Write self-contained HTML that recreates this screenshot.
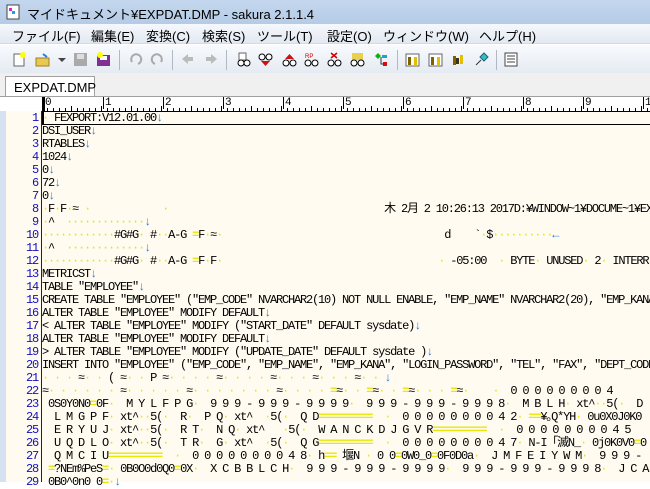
<!DOCTYPE html>
<html><head><meta charset="utf-8"><style>
*{margin:0;padding:0;box-sizing:border-box}
body{width:650px;height:482px;overflow:hidden;background:#fff;font-family:"Liberation Sans","Noto Sans CJK JP",sans-serif;position:relative}
#title{position:absolute;left:0;top:0;width:650px;height:24px;background:linear-gradient(#c4d7ee,#b5cbe6);font-size:13px;color:#000}
#title span{position:absolute;left:27px;top:4px}
#menu{position:absolute;left:0;top:24px;width:650px;height:20px;background:linear-gradient(#f5f8fc,#e3e9f2);font-size:13px;border-bottom:1px solid #d4dbe5}
#menu span{position:absolute;top:2px}
#tb{position:absolute;left:0;top:45px;width:650px;height:28px;background:linear-gradient(#f8fafd,#e5ebf3)}
.ic{position:absolute;top:7px;width:15px;height:15px}
.sep{position:absolute;top:5px;width:1px;height:20px;background:#b0b8c4}
#tabbar{position:absolute;left:0;top:73px;width:650px;height:24px;background:#f0f0f0}
#tab{position:absolute;left:5px;top:3px;width:90px;height:21px;background:#fff;border:1px solid #a0a0a0;border-bottom:none;font-size:13px;padding:3px 0 0 8px}
#ruler{position:absolute;left:0;top:96px;width:650px;height:15px;background:#fff;border-top:1px solid #a0a0a0;font-family:"Liberation Mono",monospace;font-size:11px}
#ed{position:absolute;left:0;top:111px;width:650px;height:371px;background:#fffbf0}
#strip{position:absolute;left:0;top:111px;width:6px;height:371px;background:#d6e2f2}
#vl{position:absolute;left:41px;top:111px;width:1px;height:371px;background:#1010c0}
#nums{position:absolute;left:6px;top:112px;width:32px;text-align:right;color:#1010c0;font-family:"Liberation Mono",monospace;font-size:12px;line-height:13px;letter-spacing:-1.2px}
#txt{position:absolute;left:42px;top:112px;font-family:"Liberation Mono","Noto Sans CJK JP",monospace;font-size:12px;line-height:13px;letter-spacing:-1.2px;white-space:pre;color:#000}
.d{color:#e6e600}
.b{color:#2080e0}
.y{color:#e8e800;font-weight:bold}
#cur{position:absolute;left:42px;top:111px;width:608px;height:14px;border-top:1px solid #000;border-bottom:1px solid #000;border-left:2px solid #000}
</style></head><body>
<div id="title"><svg style="position:absolute;left:6px;top:4px" width="14" height="16"><rect x="1" y="1" width="12" height="14" fill="#fff" stroke="#444"/><rect x="3" y="4" width="3" height="3" fill="#e020c0"/><rect x="6" y="7" width="3" height="3" fill="#20a0e0"/></svg><span>マイドキュメント¥EXPDAT.DMP - sakura 2.1.1.4</span></div>
<div id="menu"><span style="left:12px">ファイル(F)</span><span style="left:91px">編集(E)</span><span style="left:146px">変換(C)</span><span style="left:202px">検索(S)</span><span style="left:257px">ツール(T)</span><span style="left:327px">設定(O)</span><span style="left:383px">ウィンドウ(W)</span><span style="left:479px">ヘルプ(H)</span></div>
<div id="tb">
<svg class="ic" style="left:12px"><rect x="2" y="2" width="10" height="12" fill="#fff" stroke="#666"/><circle cx="11" cy="3" r="3" fill="#ff0"/></svg>
<svg class="ic" style="left:35px"><rect x="1" y="6" width="13" height="8" fill="#e8c850" stroke="#a08020"/><path d="M8 2 l4 3" stroke="#2080e0" stroke-width="2"/></svg>
<div style="position:absolute;left:58px;top:13px;border:4px solid transparent;border-top:4px solid #444"></div>
<svg class="ic" style="left:73px"><rect x="1" y="1" width="13" height="13" fill="#aaa"/><rect x="4" y="2" width="7" height="5" fill="#ddd"/></svg>
<svg class="ic" style="left:96px"><rect x="1" y="3" width="13" height="11" fill="#803090"/><rect x="4" y="4" width="7" height="4" fill="#fff"/><circle cx="4" cy="3" r="3" fill="#ff0"/></svg>
<div class="sep" style="left:119px"></div>
<svg class="ic" style="left:128px"><path d="M4 10 a5 5 0 1 1 6 2" stroke="#aaa" stroke-width="2" fill="none"/></svg>
<svg class="ic" style="left:150px"><path d="M11 10 a5 5 0 1 0 -6 2" stroke="#aaa" stroke-width="2" fill="none"/></svg>
<div class="sep" style="left:172px"></div>
<svg class="ic" style="left:180px"><path d="M2 7 l6 -5 v3 h5 v4 h-5 v3z" fill="#bbb"/></svg>
<svg class="ic" style="left:204px"><path d="M13 7 l-6 -5 v3 h-5 v4 h5 v3z" fill="#bbb"/></svg>
<div class="sep" style="left:226px"></div>
<svg class="ic" style="left:236px"><rect x="3" y="1" width="7" height="7" fill="#fff" stroke="#666"/><circle cx="5" cy="11" r="3" fill="#fff" stroke="#000"/><circle cx="11" cy="11" r="3" fill="#fff" stroke="#000"/></svg>
<svg class="ic" style="left:258px"><circle cx="4" cy="5" r="3" fill="#fff" stroke="#000"/><circle cx="11" cy="5" r="3" fill="#fff" stroke="#000"/><path d="M3 9 h9 l-4.5 5z" fill="#d01010"/></svg>
<svg class="ic" style="left:282px"><path d="M3 7 h9 l-4.5 -5z" fill="#d01010"/><circle cx="4" cy="11" r="3" fill="#fff" stroke="#000"/><circle cx="11" cy="11" r="3" fill="#fff" stroke="#000"/></svg>
<svg class="ic" style="left:304px"><text x="1" y="6" font-size="6" fill="#c00">RP</text><circle cx="4" cy="11" r="3" fill="#fff" stroke="#000"/><circle cx="11" cy="11" r="3" fill="#fff" stroke="#000"/></svg>
<svg class="ic" style="left:327px"><path d="M4 1 l6 5 M10 1 l-6 5" stroke="#c00" stroke-width="1.5"/><circle cx="4" cy="11" r="3" fill="#fff" stroke="#000"/><circle cx="11" cy="11" r="3" fill="#fff" stroke="#000"/></svg>
<svg class="ic" style="left:350px"><rect x="2" y="1" width="11" height="7" fill="#e8d050"/><circle cx="4" cy="11" r="3" fill="#fff" stroke="#000"/><circle cx="11" cy="11" r="3" fill="#fff" stroke="#000"/></svg>
<svg class="ic" style="left:374px"><path d="M1 4 l3 -3 3 3 -3 3z" fill="#10b010"/><rect x="8" y="3" width="5" height="3" fill="#20a0d0"/><rect x="9" y="10" width="4" height="4" fill="#d01010"/><path d="M7 5 v7 h3" stroke="#333" fill="none"/></svg>
<div class="sep" style="left:397px"></div>
<svg class="ic" style="left:405px"><rect x="1" y="2" width="13" height="12" fill="#fff" stroke="#666"/><rect x="3" y="5" width="3" height="8" fill="#806000"/><rect x="9" y="5" width="3" height="8" fill="#e0c000"/></svg>
<svg class="ic" style="left:428px"><rect x="1" y="2" width="13" height="12" fill="#fff" stroke="#666"/><rect x="3" y="5" width="3" height="8" fill="#806000"/><rect x="9" y="5" width="3" height="8" fill="#e0c000"/></svg>
<svg class="ic" style="left:451px"><rect x="2" y="4" width="3" height="9" fill="#806000"/><rect x="9" y="3" width="3" height="9" fill="#e0c000"/><rect x="5" y="6" width="3" height="6" fill="#403020"/></svg>
<svg class="ic" style="left:474px"><path d="M2 13 l5 -5" stroke="#333"/><path d="M6 5 l4 -4 4 4 -4 4z" fill="#30c0c0" stroke="#206080"/></svg>
<div class="sep" style="left:496px"></div>
<svg class="ic" style="left:504px"><rect x="1" y="1" width="12" height="13" fill="#fff" stroke="#444"/><path d="M3 4h8M3 7h8M3 10h8" stroke="#444"/></svg>
</div>
<div id="tabbar"><div id="tab">EXPDAT.DMP</div></div>
<div id="ruler">
<svg width="650" height="15" style="position:absolute;left:0;top:0"><rect x="42" y="0" width="3" height="14" fill="#000"/></svg>
<div style="position:absolute;top:0;left:0">
<span style="position:absolute;left:45px">0</span><span style="position:absolute;left:103px;border-left:1px solid #000;padding-left:1px">1</span><span style="position:absolute;left:163px;border-left:1px solid #000;padding-left:1px">2</span><span style="position:absolute;left:223px;border-left:1px solid #000;padding-left:1px">3</span><span style="position:absolute;left:283px;border-left:1px solid #000;padding-left:1px">4</span><span style="position:absolute;left:343px;border-left:1px solid #000;padding-left:1px">5</span><span style="position:absolute;left:403px;border-left:1px solid #000;padding-left:1px">6</span><span style="position:absolute;left:463px;border-left:1px solid #000;padding-left:1px">7</span><span style="position:absolute;left:523px;border-left:1px solid #000;padding-left:1px">8</span><span style="position:absolute;left:583px;border-left:1px solid #000;padding-left:1px">9</span><span style="position:absolute;left:643px;border-left:1px solid #000;padding-left:1px">1</span>
</div>
<div style="position:absolute;left:42px;top:11px;width:608px;height:3px;background:repeating-linear-gradient(90deg,transparent 0 5px,#000 5px 6px)"></div>
<div style="position:absolute;left:42px;top:9px;width:608px;height:5px;background:repeating-linear-gradient(90deg,transparent 0 29px,#000 29px 30px)"></div>
</div>
<div id="ed"></div><div id="strip"></div><div id="vl"></div>
<div id="nums">1<br>2<br>3<br>4<br>5<br>6<br>7<br>8<br>9<br>10<br>11<br>12<br>13<br>14<br>15<br>16<br>17<br>18<br>19<br>20<br>21<br>22<br>23<br>24<br>25<br>26<br>27<br>28<br>29</div>
<div id="cur"></div>
<div id="txt"><span class="d">·</span> FEXPORT:V12.01.00<span class="b">↓</span>
DSI_USER<span class="b">↓</span>
RTABLES<span class="b">↓</span>
1024<span class="b">↓</span>
0<span class="b">↓</span>
72<span class="b">↓</span>
0<span class="b">↓</span>
<span class="d">·</span>F<span class="d">·</span>F<span class="d">·</span>≈ <span class="d">·</span>            <span class="d">·</span>                                    木 2月 2 10:26:13 2017D:¥WINDOW~1¥DOCUME~1¥EX
<span class="d">·</span>^  <span class="d">·············</span><span class="b">↓</span>
<span class="d">············</span>#G#G<span class="d">·</span> #<span class="d">··</span>A-G <span class="y">=</span>F<span class="d">·</span>≈<span class="d">·</span>                                     d    `<span class="d">·</span>$<span class="d">··········</span><span class="b">←</span>
<span class="d">·</span>^  <span class="d">·············</span><span class="b">↓</span>
<span class="d">············</span>#G#G<span class="d">·</span> #<span class="d">··</span>A-G <span class="y">=</span>F<span class="d">·</span>F<span class="d">·</span>                                    <span class="d">·</span> -05:00  <span class="d">·</span> BYTE<span class="d">·</span> UNUSED<span class="d">·</span> 2<span class="d">·</span> INTERR
METRICST<span class="b">↓</span>
TABLE "EMPLOYEE"<span class="b">↓</span>
CREATE TABLE "EMPLOYEE" ("EMP_CODE" NVARCHAR2(10) NOT NULL ENABLE, "EMP_NAME" NVARCHAR2(20), "EMP_KANA
ALTER TABLE "EMPLOYEE" MODIFY DEFAULT<span class="b">↓</span>
&lt; ALTER TABLE "EMPLOYEE" MODIFY ("START_DATE" DEFAULT sysdate)<span class="b">↓</span>
ALTER TABLE "EMPLOYEE" MODIFY DEFAULT<span class="b">↓</span>
&gt; ALTER TABLE "EMPLOYEE" MODIFY ("UPDATE_DATE" DEFAULT sysdate )<span class="b">↓</span>
INSERT INTO "EMPLOYEE" ("EMP_CODE", "EMP_NAME", "EMP_KANA", "LOGIN_PASSWORD", "TEL", "FAX", "DEPT_CODE
<span class="d">· · ·</span> ≈<span class="d">· ·</span> ( ≈<span class="d">· ·</span> P ≈<span class="d">· · · ·</span> ≈<span class="d">· · · ·</span> ≈<span class="d">· · ·</span> ≈<span class="d">· · ·</span> ≈<span class="d">· ·</span> <span class="b">↓</span>
≈<span class="d">· · · · · ·</span> ≈<span class="d">· · · · ·</span> ≈<span class="d">· · · · · · ·</span> ≈<span class="d">· · · ·</span> <span class="y">=</span>≈<span class="d">· ·</span> <span class="y">=</span>≈<span class="d">· ·</span> <span class="y">=</span>≈<span class="d">· · ·</span> <span class="y">=</span>≈<span class="d">·</span>    <span class="d">·</span>  0 0 0 0 0 0 0 0 4
 0S0Y0N0<span class="y">=</span>0F<span class="d">·</span>  M Y L F P G<span class="d">·</span>  9 9 9 - 9 9 9 - 9 9 9 9<span class="d">·</span>  9 9 9 - 9 9 9 - 9 9 9 8<span class="d">·</span>  M B L H<span class="d">·</span> xt^<span class="d">··</span>5(<span class="d">·</span>  D )
  L M G P F<span class="d">·</span> xt^<span class="d">··</span>5(<span class="d">·</span>  R<span class="d">·</span>  P Q<span class="d">·</span> xt^  <span class="d">·</span>5(<span class="d">·</span>  Q D<span class="y">=========</span>  <span class="d">·</span>  0 0 0 0 0 0 0 0 4 2<span class="d">·</span> <span class="y">==</span>¥｡Q*YH<span class="d">·</span> 0u0X0J0K0
  E R Y U J<span class="d">·</span> xt^<span class="d">··</span>5(<span class="d">·</span>  R T<span class="d">·</span>  N Q<span class="d">·</span> xt^   <span class="d">·</span>5(<span class="d">·</span>  W A N C K D J G V R<span class="y">=========</span>  <span class="d">·</span>  0 0 0 0 0 0 0 0 4 5
  U Q D L O<span class="d">·</span> xt^<span class="d">··</span>5(<span class="d">·</span>  T R<span class="d">·</span>  G<span class="d">·</span> xt^  <span class="d">·</span>5(<span class="d">·</span>  Q G<span class="y">=========</span>  <span class="d">·</span>  0 0 0 0 0 0 0 0 4 7<span class="d">·</span> N-I「滅N_<span class="d">·</span> 0j0K0V0<span class="y">=</span>0
  Q M C I U<span class="y">=========</span>  <span class="d">·</span>  0 0 0 0 0 0 0 0 4 8<span class="d">·</span> h<span class="y">==</span> 堰N <span class="d">·</span> 0 0<span class="y">=</span>0W0_0<span class="y">=</span>0F0D0a<span class="d">·</span>  J M F E I Y W M<span class="d">·</span>  9 9 9 -
 <span class="y">=</span>?NEm%PeS<span class="y">=</span><span class="d">·</span> 0B0O0d0Q0<span class="y">=</span>0X<span class="d">·</span>  X C B B L C H<span class="d">·</span>  9 9 9 - 9 9 9 - 9 9 9 9<span class="d">·</span>  9 9 9 - 9 9 9 - 9 9 9 8<span class="d">·</span>  J C A
 0B0^0n0 0<span class="y">=</span><span class="d">·</span><span class="b">↓</span></div>
</body></html>
